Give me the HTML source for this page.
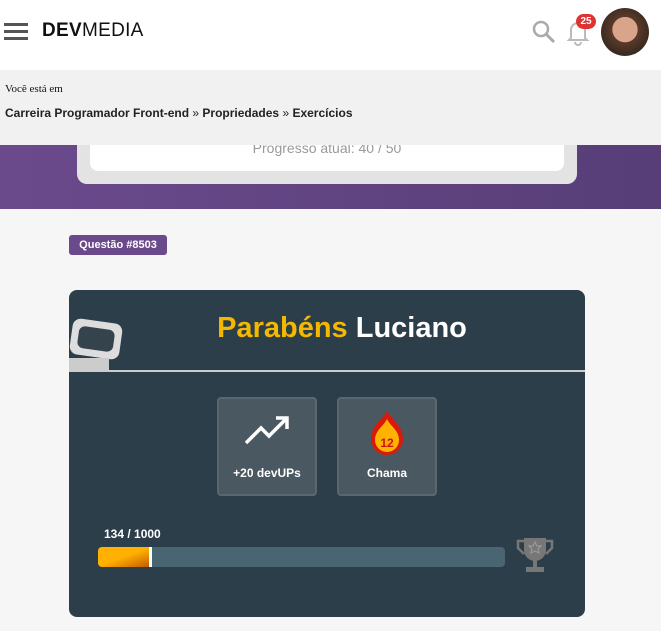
<!DOCTYPE html><html><head><meta charset="utf-8"><style>
*{margin:0;padding:0;box-sizing:border-box}
body{width:661px;height:631px;background:#f6f6f6;font-family:"Liberation Sans",sans-serif;position:relative;overflow:hidden}
.abs{position:absolute}
</style></head><body>
<div class="abs" style="left:0;top:0;width:661px;height:70px;background:#fff"></div>
<div class="abs" style="left:4px;top:23px;width:24px;height:3px;background:#555;box-shadow:0 7px 0 #555,0 14px 0 #555"></div>
<div class="abs" style="left:42px;top:20px;font-size:19px;color:#111;letter-spacing:0.3px"><b>DEV</b>MEDIA</div>
<svg class="abs" style="left:531px;top:19px" width="26" height="26" viewBox="0 0 26 26"><circle cx="10" cy="10" r="7" fill="none" stroke="#aaa" stroke-width="2.5"/><line x1="15" y1="15" x2="23" y2="23" stroke="#aaa" stroke-width="3"/></svg>
<svg class="abs" style="left:566px;top:18px" width="24" height="28" viewBox="0 0 24 28"><path d="M5 20V12a7 7 0 0 1 14 0v8l2 2H3z" fill="none" stroke="#bbb" stroke-width="2"/><path d="M9 24a3 3 0 0 0 6 0" fill="none" stroke="#bbb" stroke-width="2"/></svg>
<div class="abs" style="left:576px;top:14px;width:20px;height:15px;border-radius:8px;background:#d33;color:#fff;font-size:10px;font-weight:bold;text-align:center;line-height:15px">25</div>
<div class="abs" style="left:601px;top:8px;width:48px;height:48px;border-radius:50%;background:radial-gradient(circle at 50% 45%,#d9a58a 0 35%,#5a3a2a 36%,#3a2a20 70%,#6a7a80 100%)"></div>
<div class="abs" style="left:0;top:70px;width:661px;height:75px;background:#f1f1f1"></div>
<div class="abs" style="left:5px;top:83px;font-family:'Liberation Serif',serif;font-size:11px;color:#111">Você está em</div>
<div class="abs" style="left:5px;top:106px;font-size:12px;font-weight:bold;color:#222">Carreira Programador Front-end <span style="font-weight:normal">»</span> Propriedades <span style="font-weight:normal">»</span> Exercícios</div>
<div class="abs" style="left:0;top:145px;width:661px;height:64px;background:linear-gradient(90deg,#6b4a8c,#573e78)"></div>
<div class="abs" style="left:77px;top:145px;width:500px;height:39px;background:#e3e3e3;border-radius:0 0 10px 10px"></div>
<div class="abs" style="left:90px;top:145px;width:474px;height:26px;background:#fff;border-radius:0 0 8px 8px;text-align:center;color:#999;font-size:14px;line-height:6px;overflow:hidden">Progresso atual: 40 / 50</div>
<div class="abs" style="left:69px;top:235px;width:98px;height:20px;background:#6a4a8a;border-radius:3px;color:#fff;font-size:11px;font-weight:bold;text-align:center;line-height:20px">Questão #8503</div>
<div class="abs" style="left:69px;top:290px;width:516px;height:327px;background:#2b3e4a;border-radius:8px;overflow:hidden">
 <div class="abs" style="left:0;top:80px;width:516px;height:2px;background:#ccc"></div>
 <div class="abs" style="left:0;top:22px;width:516px;text-align:center;font-size:29px;font-weight:bold;color:#fff;padding-left:30px"><span style="color:#f5b800">Parabéns</span> Luciano</div>
 <div class="abs" style="left:2px;top:31px;width:50px;height:36px;background:#ddd;border-radius:8px;transform:rotate(8deg)"></div>
 <div class="abs" style="left:9px;top:38px;width:36px;height:22px;background:#34434c;border-radius:6px;transform:rotate(8deg)"></div>
 <div class="abs" style="left:0;top:68px;width:40px;height:12px;background:#ccc"></div>
 <div class="abs" style="left:148px;top:107px;width:100px;height:99px;background:#4a5861;border:2px solid #5a6771;border-radius:4px;color:#fff;font-size:12px;font-weight:bold;text-align:center">
  <svg style="margin-top:14px" width="48" height="34" viewBox="0 0 48 34"><path d="M3 30L18 15l8 8L44 5M33 5h11v11" fill="none" stroke="#fff" stroke-width="3.5"/></svg>
  <div style="margin-top:16px">+20 devUPs</div></div>
 <div class="abs" style="left:268px;top:107px;width:100px;height:99px;background:#4a5861;border:2px solid #5a6771;border-radius:4px;color:#fff;font-size:12px;font-weight:bold;text-align:center">
  <svg style="margin-top:10px" width="40" height="46" viewBox="0 0 40 46"><path d="M20 2C24 10 36 16 36 30a16 16 0 0 1-32 0C4 16 16 10 20 2z" fill="#d81a0a"/><path d="M20 10C23 17 32 21 32 31a12 12 0 0 1-24 0C8 21 17 17 20 10z" fill="#ffb300"/><text x="20" y="38" font-size="12" text-anchor="middle" fill="#d01010" font-family="Liberation Sans">12</text></svg>
  <div style="margin-top:8px">Chama</div></div>
 <div class="abs" style="left:35px;top:237px;font-size:12px;color:#fff;font-weight:bold">134 / 1000</div>
 <div class="abs" style="left:29px;top:257px;width:407px;height:20px;background:#4a6572;border-radius:4px;overflow:hidden"><div style="width:54px;height:20px;background:linear-gradient(160deg,#ffb000 50%,#c45a00);border-right:3px solid #fff"></div></div>
 <svg class="abs" style="left:447px;top:246px" width="38" height="38" viewBox="0 0 38 38"><path d="M8 2h22v12a11 11 0 0 1-22 0z" fill="#777"/><path d="M8 5H2v7l6 6M30 5h6v7l-6 6" fill="none" stroke="#777" stroke-width="2.5"/><rect x="17" y="24" width="4" height="7" fill="#777"/><rect x="10" y="31" width="18" height="5" fill="#777"/><path d="M19 6l2 4h4l-3 3 1 4-4-2-4 2 1-4-3-3h4z" fill="none" stroke="#999" stroke-width="1.2"/></svg>
</div>
</body></html>
